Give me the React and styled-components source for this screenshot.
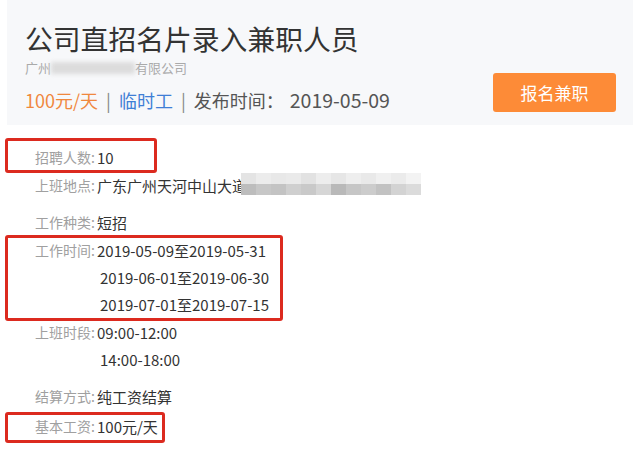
import React from 'react';
import styled, { createGlobalStyle } from 'styled-components';

const GlobalStyle = createGlobalStyle`
  body {
    margin: 0;
    background: #fff;
    font-family: "Noto Sans CJK SC", "Noto Sans", sans-serif;
  }
`;

const Page = styled.div`
  width: 640px;
  height: 457px;
  overflow: hidden;
`;

const Header = styled.div`
  margin: 0 7px;
  height: 125px;
  box-sizing: border-box;
  background: #f7f8fa;
  padding: 20px 17px 0 18px;
  display: flex;
  justify-content: space-between;
  align-items: flex-start;
`;

const Info = styled.div`
  display: flex;
  flex-direction: column;
`;

const Title = styled.h1`
  margin: 0;
  font-size: 27.8px;
  font-weight: 400;
  line-height: 36px;
  color: #333;
`;

const Company = styled.div`
  margin-top: 2px;
  font-size: 13px;
  line-height: 20px;
  color: #aaa;
  display: flex;
  align-items: center;
`;

const Smudge = styled.span`
  display: inline-block;
  width: 84px;
  height: 12px;
  background: #dcdcdc;
  filter: blur(2px);
`;

const Meta = styled.div`
  margin-top: 8px;
  font-size: 18px;
  line-height: 28px;
  color: #555;
  display: flex;
  align-items: baseline;
`;

const Pay = styled.span`
  color: #f0883e;
`;

const Kind = styled.span`
  color: #3f7fd6;
`;

const Sep = styled.span`
  color: #888;
  margin: 0 8px;
`;

const Date = styled.span`
  font-size: 19.5px;
  margin-left: 6px;
`;

const ApplyButton = styled.button`
  margin-top: 53px;
  width: 123px;
  height: 39px;
  border: 0;
  border-radius: 3px;
  background: #fd8b37;
  color: #fff;
  font-family: inherit;
  font-size: 17px;
  cursor: pointer;
`;

const Details = styled.div`
  display: flex;
  flex-direction: column;
  padding-top: 19px;
`;

const Row = styled.div`
  position: relative;
  margin-top: ${({ $mt }) => $mt || 0}px;
  padding-left: 35px;
  display: flex;
  align-items: flex-start;

  ${({ $box }) =>
    $box &&
    `
    &::before {
      content: "";
      position: absolute;
      left: 5px;
      top: ${$box.top}px;
      width: ${$box.w}px;
      height: ${$box.h}px;
      box-sizing: border-box;
      border: 3px solid #dc2a1f;
      border-radius: 3px;
      pointer-events: none;
    }
  `}
`;

const Label = styled.span`
  width: 62px;
  flex: none;
  font-size: 14px;
  line-height: 27px;
  color: #a0a0a0;
`;

const Values = styled.div`
  display: flex;
  flex-direction: column;
`;

const Value = styled.span`
  font-size: 15px;
  line-height: 27px;
  color: #333;
  padding-left: ${({ $indent }) => ($indent ? 3 : 0)}px;
  display: flex;
  align-items: center;
`;

const mosaic = [
  ['#e4e4e4', '#ececec', '#e8e8e8', '#eaeaea', '#e2e2e2', '#ededed', '#e6e6e6', '#eeeeee', '#e9e9e9', '#f0f0f0', '#ebebeb', '#f3f3f3'],
  ['#bdbdbd', '#c7c7c7', '#c3c3c3', '#cfcfcf', '#c9c9c9', '#d6d6d6', '#b9b9b9', '#c6c6c6', '#cccccc', '#c2c2c2', '#d3d3d3', '#dbdbdb'],
];

const Mosaic = () => (
  <svg width="180" height="22" viewBox="0 0 180 22" style={{ marginLeft: -6, marginTop: -4 }}>
    {mosaic.map((row, r) =>
      row.map((c, i) => (
        <rect key={`${r}-${i}`} x={i * 15} y={r * 11} width="15" height="11" fill={c} />
      ))
    )}
  </svg>
);

const rows = [
  { label: '招聘人数:', values: ['10'], mt: 0, box: { top: -6, w: 152, h: 35 } },
  { label: '上班地点:', values: ['广东广州天河中山大道'], mosaic: true, mt: 1 },
  { label: '工作种类:', values: ['短招'], mt: 10 },
  {
    label: '工作时间:',
    values: ['2019-05-09至2019-05-31', '2019-06-01至2019-06-30', '2019-07-01至2019-07-15'],
    mt: 1,
    box: { top: -2, w: 278, h: 86 },
  },
  { label: '上班时段:', values: ['09:00-12:00', '14:00-18:00'], mt: 1 },
  { label: '结算方式:', values: ['纯工资结算'], mt: 10 },
  { label: '基本工资:', values: ['100元/天'], mt: 3, box: { top: -1, w: 160, h: 31 } },
];

export default function App() {
  return (
    <Page>
      <GlobalStyle />
      <Header>
        <Info>
          <Title>公司直招名片录入兼职人员</Title>
          <Company>
            广州<Smudge />有限公司
          </Company>
          <Meta>
            <Pay>100元/天</Pay>
            <Sep>|</Sep>
            <Kind>临时工</Kind>
            <Sep>|</Sep>
            发布时间：
            <Date>2019-05-09</Date>
          </Meta>
        </Info>
        <ApplyButton>报名兼职</ApplyButton>
      </Header>
      <Details>
        {rows.map((row) => (
          <Row key={row.label} $mt={row.mt} $box={row.box}>
            <Label>{row.label}</Label>
            <Values>
              {row.values.map((v, i) => (
                <Value key={v} $indent={i > 0}>
                  {v}
                  {row.mosaic && <Mosaic />}
                </Value>
              ))}
            </Values>
          </Row>
        ))}
      </Details>
    </Page>
  );
}
